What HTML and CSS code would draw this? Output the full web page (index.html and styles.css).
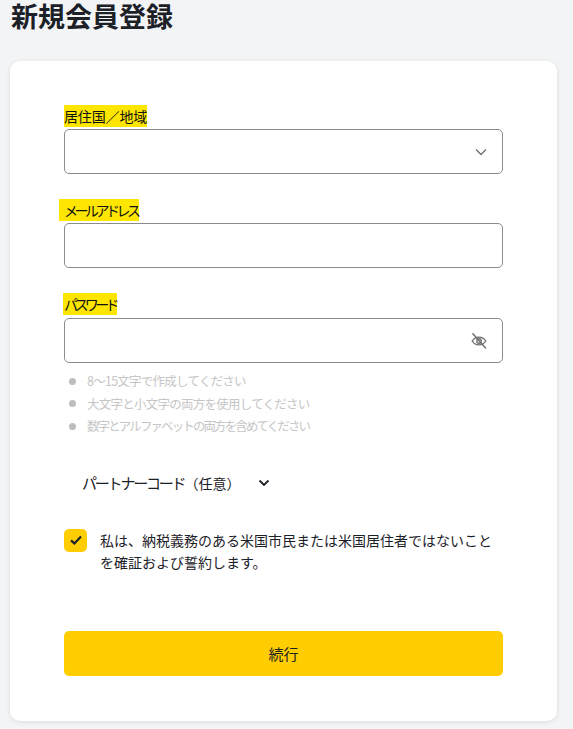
FILE: index.html
```html
<!DOCTYPE html>
<html lang="ja">
<head>
   <meta charset="UTF-8">
   <meta name="viewport" content="width=device-width, initial-scale=1.0">
   <title>新規会員登録</title>
   <link rel="stylesheet" href="styles.css">
</head>
<body>

<h1 class="page-title">新規会員登録</h1>

<form class="card">
   <div class="field field-country">
       <label class="field-label label-country">居住国／地域</label>
       <div class="input-box">
           <svg class="input-icon icon-chevron" width="14" height="14" viewBox="0 0 14 14" fill="none" stroke="#6f6f6f" stroke-width="1.3"><path d="M2 4.5 7 9.5 12 4.5"/></svg>
       </div>
   </div>

   <div class="field field-mail">
       <label class="field-label label-mail">メールアドレス</label>
       <div class="input-box"></div>
   </div>

   <div class="field field-password">
       <label class="field-label label-password">パスワード</label>
       <div class="input-box">
           <svg class="input-icon icon-eye" width="18" height="18" viewBox="0 0 18 18" fill="none" stroke="#6f6f6f" stroke-width="1.4"><path d="M2.2 9C3.8 6.4 6 5.1 9 5.1s5.2 1.3 6.8 3.9c-1.6 2.6-3.8 3.9-6.8 3.9S3.8 11.6 2.2 9Z"/><circle cx="9" cy="9" r="2.2"/><path d="M2.5 1.3 16 16.5"/></svg>
       </div>
   </div>

   <ul class="rules">
       <li>8〜15文字で作成してください</li>
       <li>大文字と小文字の両方を使用してください</li>
       <li class="rule-kana">数字とアルファベットの両方を含めてください</li>
   </ul>

   <div class="partner">
       <span><span class="partner-kana">パートナーコード</span>（任意）</span>
       <svg width="14" height="14" viewBox="0 0 14 14" fill="none" stroke="#1c2127" stroke-width="1.8"><path d="M2.5 4.5 7 9 11.5 4.5"/></svg>
   </div>

   <div class="agree">
       <span class="checkbox">
           <svg width="14" height="14" viewBox="0 0 14 14" fill="none" stroke="#1c2127" stroke-width="2.2"><path d="M2 7.4 5.4 10.4 12 3.6"/></svg>
       </span>
       <p class="agree-text">私は、納税義務のある米国市民または米国居住者ではないことを確証および誓約します。</p>
   </div>

   <button type="button" class="submit">続行</button>
</form>

</body>
</html>
```

FILE: styles.css
```css
* {
    box-sizing: border-box;
}
body {
    font-family: "Noto Sans CJK JP", "Liberation Sans", sans-serif;
    margin: 0;
    padding: 0 16px 8px 10px;
    background-color: #f3f4f6;
    color: #1c2127;
}
.page-title {
    font-size: 27px;
    line-height: 31px;
    font-weight: 700;
    margin: 0 0 30px 1px;
}
.card {
    background-color: #fff;
    border-radius: 10px;
    box-shadow: 0 1px 5px rgba(0, 0, 0, 0.1);
    padding: 44px 54px 45px;
    height: 660px;
}
.field-label {
    display: table;
    background-color: #ffe600;
    color: #111;
    font-size: 14px;
    line-height: 22px;
    height: 22px;
}
.label-country {
    letter-spacing: -0.15px;
}
.input-box {
    display: flex;
    align-items: center;
    justify-content: flex-end;
    height: 45px;
    margin-top: 2px;
    border: 1px solid #8c8c8c;
    border-radius: 5px;
}
.input-icon {
    margin-right: 14px;
}
.field-mail {
    margin-top: 25px;
}
.label-mail {
    margin-left: -5px;
    padding: 0 1px 0 5px;
    letter-spacing: -3.5px;
}
.field-password {
    margin-top: 25px;
}
.label-password {
    margin-left: -1px;
    padding: 0 1px;
    margin-bottom: 3px;
    letter-spacing: -3.6px;
}
.rules {
    list-style: none;
    margin: 7px 0 0;
    padding: 0 0 0 5px;
    color: #c6c6c6;
    font-size: 12.5px;
    line-height: 22.5px;
    letter-spacing: -0.75px;
}
.rules .rule-kana {
    letter-spacing: -1.9px;
}
.rules li {
    display: flex;
    align-items: center;
    gap: 11px;
}
.rules li::before {
    content: "";
    width: 7px;
    height: 7px;
    border-radius: 50%;
    background-color: #bdbdbd;
}
.partner {
    display: flex;
    align-items: center;
    gap: 17px;
    margin: 33px 0 0 18px;
    font-size: 14px;
    line-height: 24px;
}
.partner-kana {
    font-size: 15px;
    letter-spacing: -2.2px;
}
.agree {
    display: flex;
    gap: 13px;
    margin-top: 34px;
}
.checkbox {
    flex: none;
    display: flex;
    align-items: center;
    justify-content: center;
    width: 23px;
    height: 23px;
    background-color: #ffcd00;
    border-radius: 5px;
}
.agree-text {
    margin: 0;
    font-size: 14px;
    line-height: 22px;
}
.submit {
    display: block;
    width: 100%;
    height: 45px;
    margin-top: 58px;
    border: none;
    border-radius: 5px;
    background-color: #ffcd00;
    color: #1c2127;
    font-family: inherit;
    font-size: 15px;
}
```
